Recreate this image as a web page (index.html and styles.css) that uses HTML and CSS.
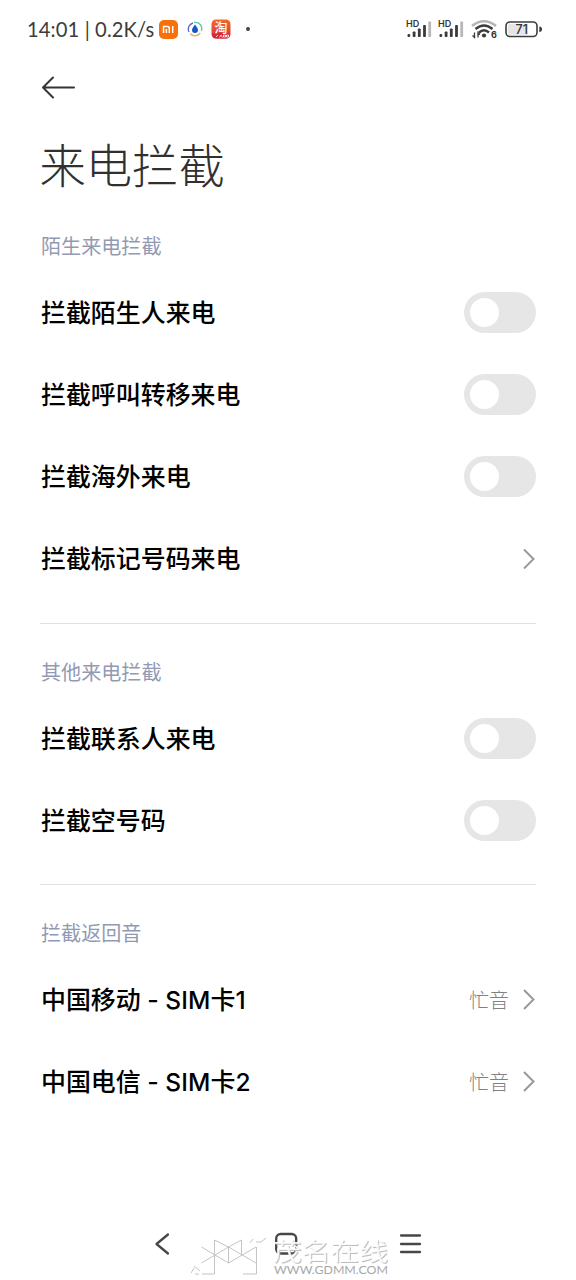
FILE: index.html
```html
<!DOCTYPE html>
<html lang="zh-CN">
<head>
<meta charset="utf-8">
<title>来电拦截</title>
<link rel="stylesheet" href="styles.css">
</head>
<body>
<div class="screen">
  <header class="status">
    <span class="clock">14:01 | 0.2K/s</span>
    <svg class="app-mi" width="19" height="19" viewBox="0 0 19 19"><rect width="19" height="19" rx="5" fill="#f8700c"/><path d="M4.5 13V6.5H8.5Q10.3 6.5 10.3 8.5V13M7.4 9V13M13.7 6V13" fill="none" stroke="#fff" stroke-width="1.5"/></svg>
    <svg class="app-ring" width="16" height="16" viewBox="0 0 16 16" fill="none" stroke-width="1.3"><path d="M2 11A6.3 6.3 0 0 1 6 2" stroke="#665fc5"/><path d="M7 1.5A6.3 6.3 0 0 1 14.3 10" stroke="#55c8aa"/><path d="M13.3 12A6.6 6.6 0 0 1 3.2 12.7" stroke="#e9ae65"/><path d="M8 3.5C9 5.4 11 6.8 11 9A3 3 0 0 1 5 9C5 6.8 7 5.4 8 3.5Z" fill="#1456c8"/></svg>
    <svg class="app-tao" width="20" height="20" viewBox="0 0 20 20"><defs><linearGradient id="tao" x2="0" y2="1"><stop stop-color="#ef6b2c"/><stop offset="1" stop-color="#dc2f3b"/></linearGradient></defs><rect x=".5" y=".5" width="19" height="19" rx="4.5" fill="url(#tao)"/><path d="M1 14.5Q10 13.5 19 14.5V15Q19 19.5 14.5 19.5H5.5Q1 19.5 1 15Z" fill="#d9253b"/><text class="tao-main" x="10" y="13">淘</text><path d="M5 18L7 16M8.5 18.5L10 16L11.5 18.5M12.5 16H14.5V18H12.5ZM15.5 16H17.5V18H15.5Z" fill="none" stroke="#fff" stroke-width=".8"/></svg>
    <i class="dot"></i>
    <svg class="system" width="138" height="24" viewBox="0 0 138 24">
      <g id="signal"><text class="hd" x="1" y="10">HD</text><g fill="#3c3c3c"><rect x="2.5" y="17" width="2.7" height="3" rx="1"/><rect x="7.7" y="14.5" width="2.8" height="5.5" rx=".8"/><rect x="12.9" y="11.5" width="2.8" height="8.5" rx=".8"/><rect x="18.1" y="8" width="2.8" height="12" rx=".8"/></g><rect x="23.3" y="4.5" width="2.8" height="15.5" rx=".8" fill="#b7b7b7"/></g>
      <use href="#signal" x="32"/>
      <g fill="none" stroke-width="2.5"><path d="M67 9Q79 -.5 91 9" stroke="#b5b5b5"/><path d="M70.5 12Q79 5 87.5 12M74 15.5Q79 11 84 15.5" stroke="#3c3c3c"/></g>
      <circle cx="79" cy="18.5" r="2.1" fill="#3c3c3c"/><path d="M69.5 15.5V20.5M67.5 18.5L69.5 20.5V15.5M73 20.5V15.5L75 17.5" fill="none" stroke="#3c3c3c" stroke-width="1.3"/>
      <text class="wifi-six" x="86" y="20.5">6</text>
      <rect x="101" y="5" width="31" height="14.5" rx="4" fill="#fff" stroke="#3c3c3c" stroke-width="1.6"/><path d="M105 6.8H123V17.7H105Q102.8 17.7 102.8 15.5V9Q102.8 6.8 105 6.8Z" fill="#e5e5e5"/><path d="M134.3 9.6Q137 9.6 137 12.3T134.3 15Z" fill="#3c3c3c"/><text class="charge" x="116.7" y="16.8">71</text>
    </svg>
  </header>
  <nav class="toolbar"><svg width="34" height="24" viewBox="0 0 34 24" fill="none" stroke="#353535" stroke-width="2" stroke-linecap="round" stroke-linejoin="round"><path d="M33 11.5H2M12 1.5L2 11.5L12 21.5"/></svg></nav>
  <h1 class="title">来电拦截</h1>
  <main class="settings">
    <section class="group">
      <h2 class="label">陌生来电拦截</h2>
      <div class="row"><span>拦截陌生人来电</span><i class="switch"></i></div>
      <div class="row"><span>拦截呼叫转移来电</span><i class="switch"></i></div>
      <div class="row"><span>拦截海外来电</span><i class="switch"></i></div>
      <div class="row"><span>拦截标记号码来电</span><svg class="chevron" viewBox="0 0 14 22"><path d="M2 2.5L11.5 12L2 21.5"/></svg></div>
    </section>
    <section class="group compact">
      <h2 class="label">其他来电拦截</h2>
      <div class="row"><span>拦截联系人来电</span><i class="switch"></i></div>
      <div class="row"><span>拦截空号码</span><i class="switch"></i></div>
    </section>
    <section class="group">
      <h2 class="label">拦截返回音</h2>
      <div class="row"><span>中国移动 <b class="dash">-</b> <b class="latin">SIM</b>卡<b class="latin">1</b></span><em class="value">忙音</em><svg class="chevron" viewBox="0 0 14 22"><path d="M2 2L11.5 11.5L2 21"/></svg></div>
      <div class="row"><span>中国电信 <b class="dash">-</b> <b class="latin">SIM</b>卡<b class="latin">2</b></span><em class="value">忙音</em><svg class="chevron" viewBox="0 0 14 22"><path d="M2 2L11.5 11.5L2 21"/></svg></div>
    </section>
  </main>
  <footer class="navigation">
    <svg width="576" height="60" viewBox="0 0 576 60">
      <g fill="none" stroke="#474747" stroke-width="2.3" stroke-linecap="round" stroke-linejoin="round"><path d="M168 14.5L156.5 24L168 33.5"/><rect x="276.2" y="14" width="20" height="19.5" rx="4.5"/><path d="M401 15.5H420M401 24H420M401 32H420"/></g>
      <path class="mark" d="M201.5 27L228.5 43L256 27M201.5 43L228.5 27L256 43M214.5 20V54H202M214.5 20L228.5 27V43M241.5 20V35M228.5 27L241.5 20M256.5 27V54H243M250 23L253 19M256 22H261L266 18M191 53L194 48M194 46L200 51M195 54H199"/>
      <text class="mark-name" x="273" y="40" textLength="115" lengthAdjust="spacingAndGlyphs">茂名在线</text>
      <text class="mark-url" x="274" y="54" textLength="114" lengthAdjust="spacingAndGlyphs">WWW.GDMM.COM</text>
    </svg>
  </footer>
</div>
</body>
</html>
```
FILE: styles.css
```css
* { box-sizing: border-box; }
body { margin: 0; background: #fff; color: #000; font-family: "Noto Sans CJK SC", sans-serif; }
.screen { width: 576px; height: 1280px; display: flex; flex-direction: column; overflow: hidden; }
.status { height: 58px; padding: 0 33px 0 27px; display: flex; align-items: center; flex: none; }
.clock { width: 132px; font: 20.2px/24px Lato, sans-serif; letter-spacing: .1px; white-space: nowrap; color: #3d3d3d; }
.app-ring { margin-left: 9px; }
.app-tao { margin-left: 8px; overflow: visible; }
.dot { width: 4px; height: 4px; margin-left: 15px; border-radius: 50%; background: #444; }
.system { margin-left: auto; }
.status text { text-anchor: middle; font-family: Inter, sans-serif; fill: #333; }
.status .hd { text-anchor: start; font-size: 9px; font-weight: 600; }
.status .wifi-six { text-anchor: start; font-size: 9px; font-weight: 700; }
.status .charge { font-size: 12.5px; font-weight: 500; }
.status .tao-main { font: 500 13px "Noto Sans CJK SC", sans-serif; fill: #fff; }
.toolbar { height: 60px; padding: 0 41px; display: flex; align-items: center; flex: none; }
.title { height: 96px; margin: 0; padding: 0 39.5px; font-size: 46.3px; font-weight: 300; line-height: 89px; color: #303030; flex: none; }
.settings { padding: 0 40px; flex: 1; }
.group { padding: 21px 0 24px; border-bottom: 1px solid #e1e1e1; }
.group:first-child { padding-top: 5px; }
.group:last-child { border-bottom: 0; }
.group.compact { padding-bottom: 23px; }
.label { height: 52px; margin: 0; padding-left: 1px; font-size: 20.1px; font-weight: 400; line-height: 54px; color: #929ab3; }
.row { height: 82px; padding-left: 1px; display: flex; align-items: center; font-size: 24.95px; font-weight: 500; }
.row > span { margin-right: auto; padding-bottom: 2px; white-space: nowrap; }
.dash, .latin { font-family: Inter, sans-serif; font-weight: 500; }
.dash { margin: 0 .8px; }
.latin { font-size: 24.5px; letter-spacing: .2px; }
.switch { width: 72px; height: 41px; padding: 6px; border-radius: 21px; background: #e6e6e6; }
.switch::before { content: ""; display: block; width: 29px; height: 29px; border-radius: 50%; background: #fff; }
.chevron { width: 14px; height: 22px; fill: none; stroke: #999; stroke-width: 2; }
.value { margin-right: 13px; font-size: 20px; font-weight: 300; font-style: normal; color: #808080; }
.navigation { height: 60px; flex: none; }
.navigation svg { display: block; }
.mark { fill: none; stroke: #c4c4c4; stroke-width: 1; }
.mark-name { font: 400 24px "Noto Sans CJK SC", sans-serif; fill: #fff; fill-opacity: .9; filter: drop-shadow(1px 1px 0 #b8b8b8); }
.mark-url { font: 12px Lato, sans-serif; fill: #a8a8a8; }
```
